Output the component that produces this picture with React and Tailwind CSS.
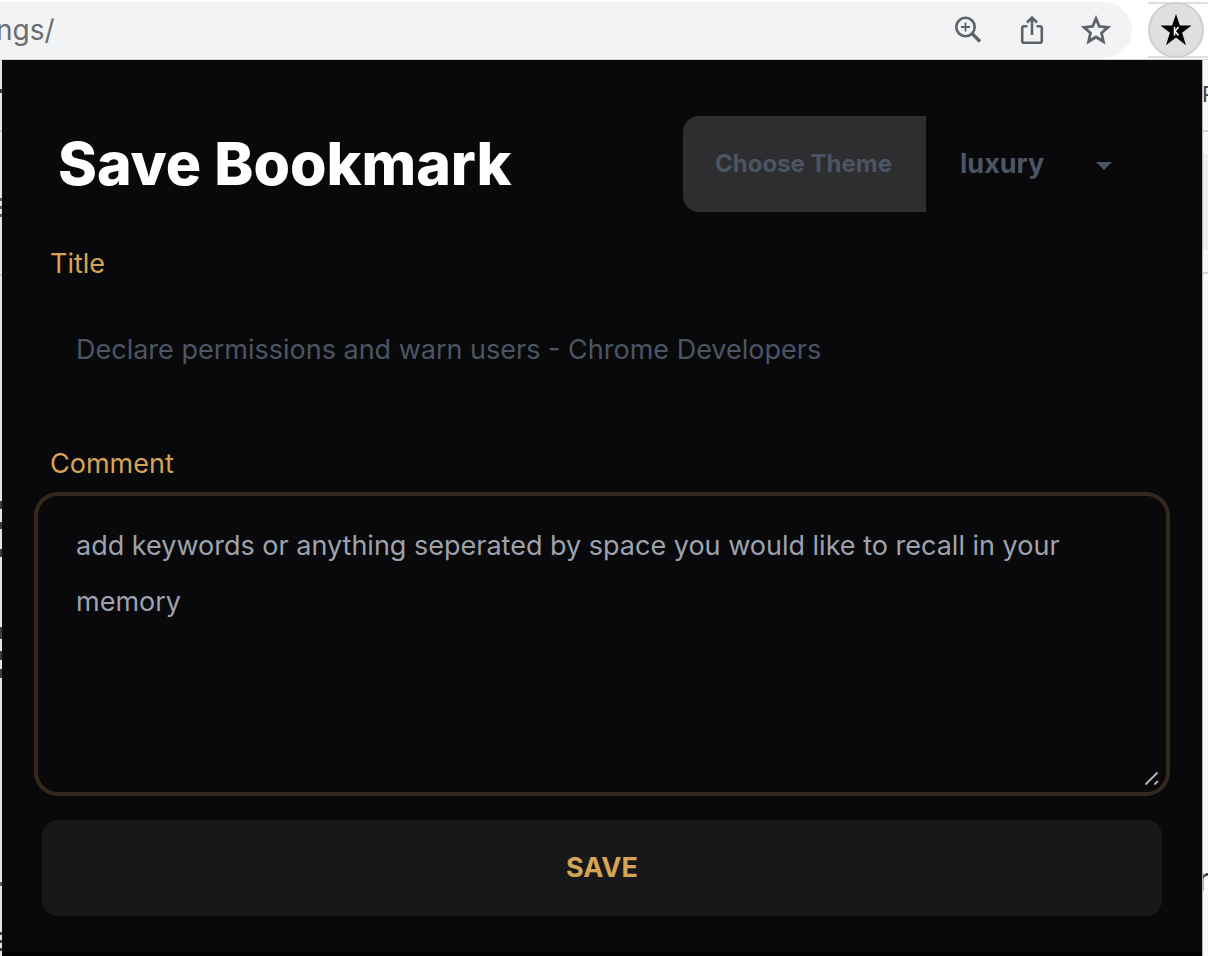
import React from "react";

function ZoomIcon() {
  return (
    <svg width="28" height="28" viewBox="0 0 28 28" fill="none" stroke="#5f6368" aria-hidden="true">
      <circle cx="11.5" cy="11" r="9.2" strokeWidth="2.6" />
      <path d="M11.5 6.5v9M7 11h9" strokeWidth="1.8" />
      <path d="M18 17.5l8 8" strokeWidth="3.4" />
    </svg>
  );
}

function ShareIcon() {
  return (
    <svg width="24" height="30" viewBox="0 0 24 30" fill="none" stroke="#5f6368" strokeWidth="2.6" aria-hidden="true">
      <path d="M7.5 11.2H4a1.8 1.8 0 0 0-1.8 1.8v13A1.8 1.8 0 0 0 4 27.8h16a1.8 1.8 0 0 0 1.8-1.8V13a1.8 1.8 0 0 0-1.8-1.8h-3.5" />
      <path d="M12 20V3M7 7.500l5-5 5 5" />
    </svg>
  );
}

function StarIcon() {
  return (
    <svg width="30" height="30" viewBox="0 0 30 30" fill="none" stroke="#5f6368" strokeWidth="2.8" aria-hidden="true">
      <path d="M15 3.600l3.400 7.900 8.600.8-6.500 5.700 1.900 8.500-7.400-4.500-7.400 4.500 1.900-8.500L3 12.300l8.600-.8z" />
    </svg>
  );
}

function ExtensionIcon() {
  return (
    <svg width="32" height="32" viewBox="0 0 32 32" aria-hidden="true">
      <path d="M16 0l3.900 11.600H31.500l-9.400 7.200 3.900 12.400-10-7.600-10 7.600 3.900-12.400L.5 11.600h11.600z" fill="#000" />
      <path d="M14.500 13v8.500M18.500 13l-3.500 4.200 3.500 4.300" fill="none" stroke="#fff" strokeWidth="1.500" />
    </svg>
  );
}

function BrowserBar() {
  return (
    <header className="flex h-[60px] items-center justify-between border-b border-[#d4d4d4] bg-white">
      <div className="flex h-14 min-w-0 flex-1 items-center justify-between rounded-r-full bg-[#f1f3f4] pr-1">
        <span className="-ml-1 text-[28px] leading-10 text-[#6b6c6f]">ngs/</span>
        <div className="flex items-center">
          <button aria-label="Zoom" className="grid h-8 w-16 place-items-center"><ZoomIcon /></button>
          <button aria-label="Share" className="grid h-8 w-16 place-items-center"><ShareIcon /></button>
          <button aria-label="Bookmark this tab" className="grid h-8 w-16 place-items-center"><StarIcon /></button>
        </div>
      </div>
      <div className="flex h-14 w-[60px] items-center border-y-2 border-[#dedede] bg-white ml-4">
        <button aria-label="Extension" className="grid size-14 shrink-0 place-items-center rounded-full border-2 border-[#cfcfcf] bg-[#e0e0e0]">
          <ExtensionIcon />
        </button>
      </div>
    </header>
  );
}

function LeftEdge() {
  return (
    <div className="w-[2px] shrink-0 overflow-hidden bg-[#e4e4e4]" aria-hidden="true">
      <div className="mt-[29px] h-1 bg-[#3c4043]" />
      <div className="mt-[37px] h-[2px] bg-[#c8c8c8]" />
      <div className="mt-[66px] h-[3px] bg-[#5f6368]" />
      <div className="mt-[5px] h-[3px] bg-[#5f6368]" />
      <div className="mt-[5px] h-[3px] bg-[#5f6368]" />
      <div className="mt-[57px] h-[2px] bg-[#c8c8c8]" />
      <div className="mt-[225px] h-2 bg-[#3c4043]" />
      <div className="mt-[13px] h-[7px] bg-[#3c4043]" />
      <div className="mt-5 h-2 bg-[#3c4043]" />
      <div className="mt-[70px] h-3 bg-[#3c4043]" />
      <div className="mt-3 h-[9px] bg-[#3c4043]" />
      <div className="mt-[9px] h-[9px] bg-[#3c4043]" />
      <div className="mt-[204px] h-1 bg-[#5f6368]" />
      <div className="mt-[46px] h-[3px] bg-[#3c4043]" />
      <div className="mt-[5px] h-[3px] bg-[#3c4043]" />
      <div className="mt-[5px] h-[3px] bg-[#3c4043]" />
    </div>
  );
}

function RightEdge() {
  return (
    <div className="w-[6px] shrink-0 overflow-hidden border-l border-[#b5b5b5] bg-[#fafafa] text-[#3c4043]" aria-hidden="true">
      <div className="mt-4 -ml-px h-[54px] pt-[2px] text-[22px] leading-8">P</div>
      <div className="h-[2px] bg-[#d4d4d6]" />
      <div className="mt-[22px] h-24 bg-[#ececee]" />
      <div className="mt-[22px] h-[2px] bg-[#d4d4d6]" />
      <div className="mt-[586px] -ml-[5px] text-[32px] leading-10">r</div>
    </div>
  );
}

function Popup() {
  return (
    <main className="min-w-0 flex-1 border-b-4 border-black bg-[#09090b] px-8 pt-14 pb-9">
      <div className="flex items-center justify-between">
        <h1 className="pl-6 text-[59px] leading-[60px] font-extrabold text-white">Save Bookmark</h1>
        <div className="flex h-24 w-[487px] items-stretch">
          <label htmlFor="theme" className="flex w-[243px] shrink-0 items-center rounded-l-2xl bg-[#2e2e30] px-8 text-2xl font-bold whitespace-nowrap text-[#4b5563]">
            Choose Theme
          </label>
          <div className="relative flex flex-1">
            <select id="theme" defaultValue="luxury" className="w-full appearance-none bg-transparent pl-[34px] text-[27px] font-bold text-[#4b5563] outline-none">
              <option value="luxury">luxury</option>
            </select>
            <svg className="pointer-events-none absolute top-[46px] right-[58px]" width="16" height="8" viewBox="0 0 16 8" aria-hidden="true">
              <path d="M0 0h16L8 8z" fill="#4b5563" />
            </svg>
          </div>
        </div>
      </div>
      <form onSubmit={(e) => e.preventDefault()}>
        <label htmlFor="title" className="mt-4 block px-4 py-4 text-[27px] leading-10 text-[#d5a454]">Title</label>
        <input id="title" type="text" defaultValue="Declare permissions and warn users - Chrome Developers" className="block h-24 w-full bg-transparent px-[42px] pt-[2px] text-[27px] text-[#4b5563] outline-none" />
        <label htmlFor="comment" className="mt-8 block px-4 pt-4 pb-2 text-[27px] leading-10 text-[#d5a454]">Comment</label>
        <div className="relative">
          <textarea id="comment" placeholder="add keywords or anything seperated by space you would like to recall in your memory" className="block h-[304px] w-full resize-none rounded-3xl border-4 border-[#33281b] bg-transparent px-[38px] py-[22px] text-[27px] leading-14 text-[#9ca3af] outline-none placeholder:text-[#9ca3af]" />
          <svg className="pointer-events-none absolute right-[10px] bottom-[10px]" width="16" height="16" viewBox="0 0 16 16" stroke="#b4b4b4" strokeWidth="1.800" aria-hidden="true">
            <path d="M1.500 14.500l12-12M10.500 14.500l3.500-3.500" />
          </svg>
        </div>
        <div className="px-2 pt-6">
          <button type="submit" className="h-24 w-full rounded-2xl bg-[#18181a] text-[27px] font-bold text-[#d5a454]">SAVE</button>
        </div>
      </form>
    </main>
  );
}

export default function App() {
  return (
    <div className="min-h-screen bg-white font-['Inter',sans-serif]">
      <BrowserBar />
      <div className="flex">
        <LeftEdge />
        <Popup />
        <RightEdge />
      </div>
    </div>
  );
}
